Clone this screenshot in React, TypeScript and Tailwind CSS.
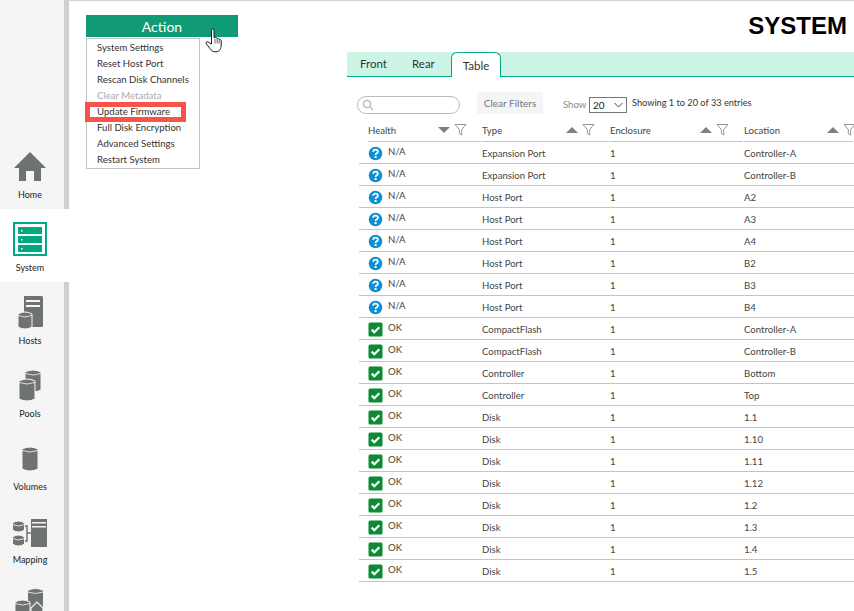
const font = "font-['Lato','Noto_Sans',sans-serif]"

const actions = [
  { label: 'System Settings' },
  { label: 'Reset Host Port' },
  { label: 'Rescan Disk Channels' },
  { label: 'Clear Metadata', disabled: true },
  { label: 'Update Firmware', marked: true },
  { label: 'Full Disk Encryption' },
  { label: 'Advanced Settings' },
  { label: 'Restart System' },
]

const rows = [
  ['N/A', 'Expansion Port', '1', 'Controller-A'],
  ['N/A', 'Expansion Port', '1', 'Controller-B'],
  ['N/A', 'Host Port', '1', 'A2'],
  ['N/A', 'Host Port', '1', 'A3'],
  ['N/A', 'Host Port', '1', 'A4'],
  ['N/A', 'Host Port', '1', 'B2'],
  ['N/A', 'Host Port', '1', 'B3'],
  ['N/A', 'Host Port', '1', 'B4'],
  ['OK', 'CompactFlash', '1', 'Controller-A'],
  ['OK', 'CompactFlash', '1', 'Controller-B'],
  ['OK', 'Controller', '1', 'Bottom'],
  ['OK', 'Controller', '1', 'Top'],
  ['OK', 'Disk', '1', '1.1'],
  ['OK', 'Disk', '1', '1.10'],
  ['OK', 'Disk', '1', '1.11'],
  ['OK', 'Disk', '1', '1.12'],
  ['OK', 'Disk', '1', '1.2'],
  ['OK', 'Disk', '1', '1.3'],
  ['OK', 'Disk', '1', '1.4'],
  ['OK', 'Disk', '1', '1.5'],
]

const gray = '#6f736f'

function Cylinder({ x, y, w, h }: { x: number; y: number; w: number; h: number }) {
  return (
    <g>
      <path d={`M${x} ${y + 2}Q${x + w / 2} ${y - 2} ${x + w} ${y + 2}V${y + h - 2}Q${x + w / 2} ${y + h + 2} ${x} ${y + h - 2}Z`} fill={gray} stroke="#f5f5f5" strokeWidth="1" />
      <path d={`M${x} ${y + 3.5}Q${x + w / 2} ${y + 6.5} ${x + w} ${y + 3.5}`} fill="none" stroke="#f5f5f5" strokeWidth="0.8" />
    </g>
  )
}

function HomeIcon() {
  return (
    <svg width="34" height="32" viewBox="0 0 34 32">
      <path d="M17 1L33 17H28V30H21V20H13V30H6V17H1Z" fill={gray} />
    </svg>
  )
}

function SystemIcon() {
  return (
    <svg width="34" height="34" viewBox="0 0 34 34">
      <rect x="1" y="1" width="32" height="32" fill="#fff" stroke="#01a982" strokeWidth="2" />
      {[5, 14, 23].map((y) => (
        <g key={y}>
          <rect x="5" y={y} width="24" height="7" fill="#01a982" />
          <rect x="8" y={y + 3} width="1.5" height="1.5" fill="#fff" />
        </g>
      ))}
    </svg>
  )
}

function HostsIcon() {
  return (
    <svg width="28" height="36" viewBox="0 0 28 36">
      <path d="M8 3H26L27 4V33L26 34H8Z" fill={gray} />
      <rect x="10" y="7" width="14" height="2" fill="#f5f5f5" />
      <rect x="10" y="12" width="14" height="2" fill="#f5f5f5" />
      <Cylinder x={2} y={19} w={14} h={17} />
    </svg>
  )
}

function PoolsIcon() {
  return (
    <svg width="26" height="34" viewBox="0 0 26 34">
      <Cylinder x={8} y={2} w={16} h={22} />
      <Cylinder x={2} y={11} w={16} h={22} />
    </svg>
  )
}

function VolumesIcon() {
  return (
    <svg width="18" height="30" viewBox="0 0 18 30">
      <Cylinder x={1} y={2} w={16} h={24} />
    </svg>
  )
}

function MappingIcon() {
  return (
    <svg width="36" height="30" viewBox="0 0 36 30">
      <path d="M19 1H35V29H19Z" fill={gray} />
      <rect x="20" y="4" width="14" height="1.5" fill="#f5f5f5" />
      <rect x="20" y="8" width="14" height="1.5" fill="#f5f5f5" />
      <path d="M12 8H15V23H12M15 15H19" fill="none" stroke={gray} strokeWidth="1.5" />
      <Cylinder x={0.5} y={3} w={12} h={11} />
      <Cylinder x={0.5} y={17} w={12} h={11} />
    </svg>
  )
}

function BackupIcon() {
  return (
    <svg width="30" height="33" viewBox="0 0 30 33">
      <Cylinder x={12.5} y={0.5} w={16} h={33} />
      <Cylinder x={0} y={12} w={15} h={22} />
      <path d="M16 33V20L22 14L28 20V33" fill={gray} stroke="#f5f5f5" strokeWidth="1.2" />
    </svg>
  )
}

function NavItem({ icon, label, active }: { icon: React.ReactNode; label: string; active?: boolean }) {
  return (
    <div className={`flex h-[73px] w-[69px] shrink-0 ${active ? 'bg-white' : ''}`}>
      <div className="flex w-[60px] flex-col items-center">
        <div className="flex h-[52px] w-full shrink-0 items-end justify-center pb-[5px]">{icon}</div>
        <span className="text-[9px] leading-[14px] text-[#222]">{label}</span>
      </div>
    </div>
  )
}

function Funnel() {
  return (
    <svg width="13" height="13" viewBox="0 0 13 13" fill="none" stroke="#8a8a8a" strokeWidth="0.9">
      <path d="M1 1.5H12L7.7 6.5V12L5.3 10.5V6.5Z" />
    </svg>
  )
}

function Arrow({ down }: { down?: boolean }) {
  return <span className={`h-0 w-0 border-x-[6px] border-x-transparent ${down ? 'border-t-[6px] border-t-[#808080]' : 'border-b-[6px] border-b-[#808080]'}`} />
}

function HeaderCell({ label, down, sortRight }: { label: string; down?: boolean; sortRight: number }) {
  return (
    <div className="relative mr-[1px] flex h-[22px] items-center border-b border-[#c4c4c4] text-[9.6px] text-[#444]">
      <span className="pt-[1px]">{label}</span>
      <div className="absolute top-[3px] flex items-center gap-[4px]" style={{ left: sortRight }}>
        <Arrow down={down} />
        <Funnel />
      </div>
    </div>
  )
}

function StatusIcon({ ok }: { ok: boolean }) {
  if (ok) {
    return (
      <svg width="15" height="15" viewBox="0 0 15 15" className="shrink-0">
        <rect x="0.5" y="0.5" width="14" height="14" rx="1.5" fill="#0c8a36" />
        <path d="M3.7 7.6L6.3 10.2L11.3 5.2" fill="none" stroke="#fff" strokeWidth="2.2" />
      </svg>
    )
  }
  return (
    <svg width="15" height="15" viewBox="0 0 15 15" className="shrink-0">
      <circle cx="7.5" cy="7.5" r="6.8" fill="#0b8fd6" />
      <path d="M5.2 5.7C5.3 3 9.9 3 9.9 5.7C9.9 7.4 7.6 7.3 7.6 9" fill="none" stroke="#fff" strokeWidth="1.8" />
      <rect x="6.6" y="10" width="2" height="2" fill="#fff" />
    </svg>
  )
}

function HandCursor() {
  return (
    <svg width="18" height="25" viewBox="0 0 18 25" className="absolute left-[205px] top-[28px]">
      <path
        d="M6.5 2.2C6.5 0.8 9 0.8 9 2.2V9.5L10.8 9.6C11.6 9.6 12 10 12.1 10.6C12.9 10.2 13.8 10.5 14 11.3C15 11 16 11.6 16.2 12.7V17C16.2 20.5 14.5 23.8 11 23.8C7.5 23.8 6.5 22.5 5 20.5L1.3 15.8C0.5 14.5 1.6 13.2 3 13.9L6.5 16Z"
        fill="#fff"
        stroke="#1c1c2a"
        strokeWidth="1"
      />
      <path d="M10 11V15.5M12.2 11V15.5M14.2 12V15.5" stroke="#1c1c2a" strokeWidth="0.7" />
    </svg>
  )
}

export default function App() {
  return (
    <div className={`${font} relative flex h-[611px] w-[854px] overflow-hidden bg-white`}>
      <aside className="h-full w-[69px] shrink-0 border-r-[5px] border-[#cdd1cd] bg-[#f5f5f5] pt-[136px]">
        <div className="flex w-[69px] flex-col">
          <NavItem icon={<HomeIcon />} label="Home" />
          <NavItem icon={<SystemIcon />} label="System" active />
          <NavItem icon={<HostsIcon />} label="Hosts" />
          <NavItem icon={<PoolsIcon />} label="Pools" />
          <NavItem icon={<VolumesIcon />} label="Volumes" />
          <NavItem icon={<MappingIcon />} label="Mapping" />
          <NavItem icon={<BackupIcon />} label="" />
        </div>
      </aside>

      <main className="flex min-w-0 flex-1 border-t border-[#d4d4d4]">
        <div className="w-[278px] shrink-0 pl-[17px] pt-[14px]">
          <div className="flex h-[22px] w-[152px] items-center justify-center bg-[#119a76] text-[14px] text-white">Action</div>
          <ul className="mt-[1px] flex w-[114px] flex-col border border-[#c4c4c4] bg-white pt-[1px]">
            {actions.map((a) => (
              <li
                key={a.label}
                className={`h-[16px] whitespace-nowrap pl-[10px] text-[9.6px] leading-[16px] ${a.disabled ? 'text-[#aaa]' : 'text-[#333]'}`}
              >
                {a.label}
              </li>
            ))}
          </ul>
        </div>

        <div className="min-w-0 flex-1">
          <h1 className="h-[51px] pr-[7px] pt-[10px] text-right font-['Liberation_Sans',sans-serif] text-[24px] leading-[30px] font-bold text-black">SYSTEM</h1>

          <div className="flex h-[25px] items-end border-b border-[#01a982] bg-[#cdf5e6] text-[11.5px] text-[#333]">
            <span className="w-[65px] self-center pl-[13px]">Front</span>
            <span className="w-[39px] self-center">Rear</span>
            <span className="-mb-[1px] flex h-[25px] w-[50px] items-center justify-center rounded-t-[6px] border border-b-0 border-[#01a982] bg-white pt-[1px]">Table</span>
          </div>

          <div className="flex h-[43px] items-start pl-[10px] pt-[15px] text-[10px]">
            <div className="mt-[4px] flex h-[18px] w-[103px] items-center rounded-full border border-[#bbb] pl-[4px]">
              <svg width="12" height="12" viewBox="0 0 12 12" fill="none" stroke="#bbb" strokeWidth="1.5">
                <circle cx="5" cy="5" r="3.6" />
                <path d="M7.8 7.8L11 11" />
              </svg>
            </div>
            <div className="ml-[17px] flex h-[22px] w-[66px] items-center justify-center bg-[#f5f5f5] pt-[1px] text-[#777]">Clear Filters</div>
            <span className="ml-[20px] mt-[6px] w-[26px] text-[9.6px] text-[#888]">Show</span>
            <div className="mt-[5px] flex h-[16px] w-[38px] items-center justify-between border border-[#777] pl-[3px] pr-[3px] text-[#222]">
              20
              <svg width="9" height="6" viewBox="0 0 9 6" fill="none" stroke="#444" strokeWidth="1">
                <path d="M0.5 1L4.5 5L8.5 1" />
              </svg>
            </div>
            <span className="ml-[5px] mt-[4px] whitespace-nowrap text-[9.2px] text-[#333]">Showing 1 to 20 of 33 entries</span>
          </div>

          <div className="ml-[12px] w-[495px]">
            <div className="grid grid-cols-[123px_128px_134px_110px]">
              <div className="pl-[9px]">
                <HeaderCell label="Health" down sortRight={70} />
              </div>
              <HeaderCell label="Type" sortRight={84} />
              <HeaderCell label="Enclosure" sortRight={90} />
              <HeaderCell label="Location" sortRight={83} />
            </div>
            {rows.map((r, i) => (
              <div key={i} className="grid h-[22px] grid-cols-[123px_128px_134px_110px] border-b border-[#c4c4c4] text-[9.6px] text-[#444]">
                <div className="flex items-start gap-[5px] pl-[9px] pt-[4px]">
                  <StatusIcon ok={r[0] === 'OK'} />
                  <span className="-mt-[1px] leading-[14px]">{r[0]}</span>
                </div>
                <div className="pt-[5px] leading-[14px]">{r[1]}</div>
                <div className="pt-[5px] leading-[14px]">{r[2]}</div>
                <div className="pt-[5px] leading-[14px]">{r[3]}</div>
              </div>
            ))}
          </div>
        </div>
      </main>

      <div className="absolute left-[85px] top-[102px] h-[20px] w-[101px] border-[5px] border-[#f8534a]" />
      <HandCursor />
    </div>
  )
}
